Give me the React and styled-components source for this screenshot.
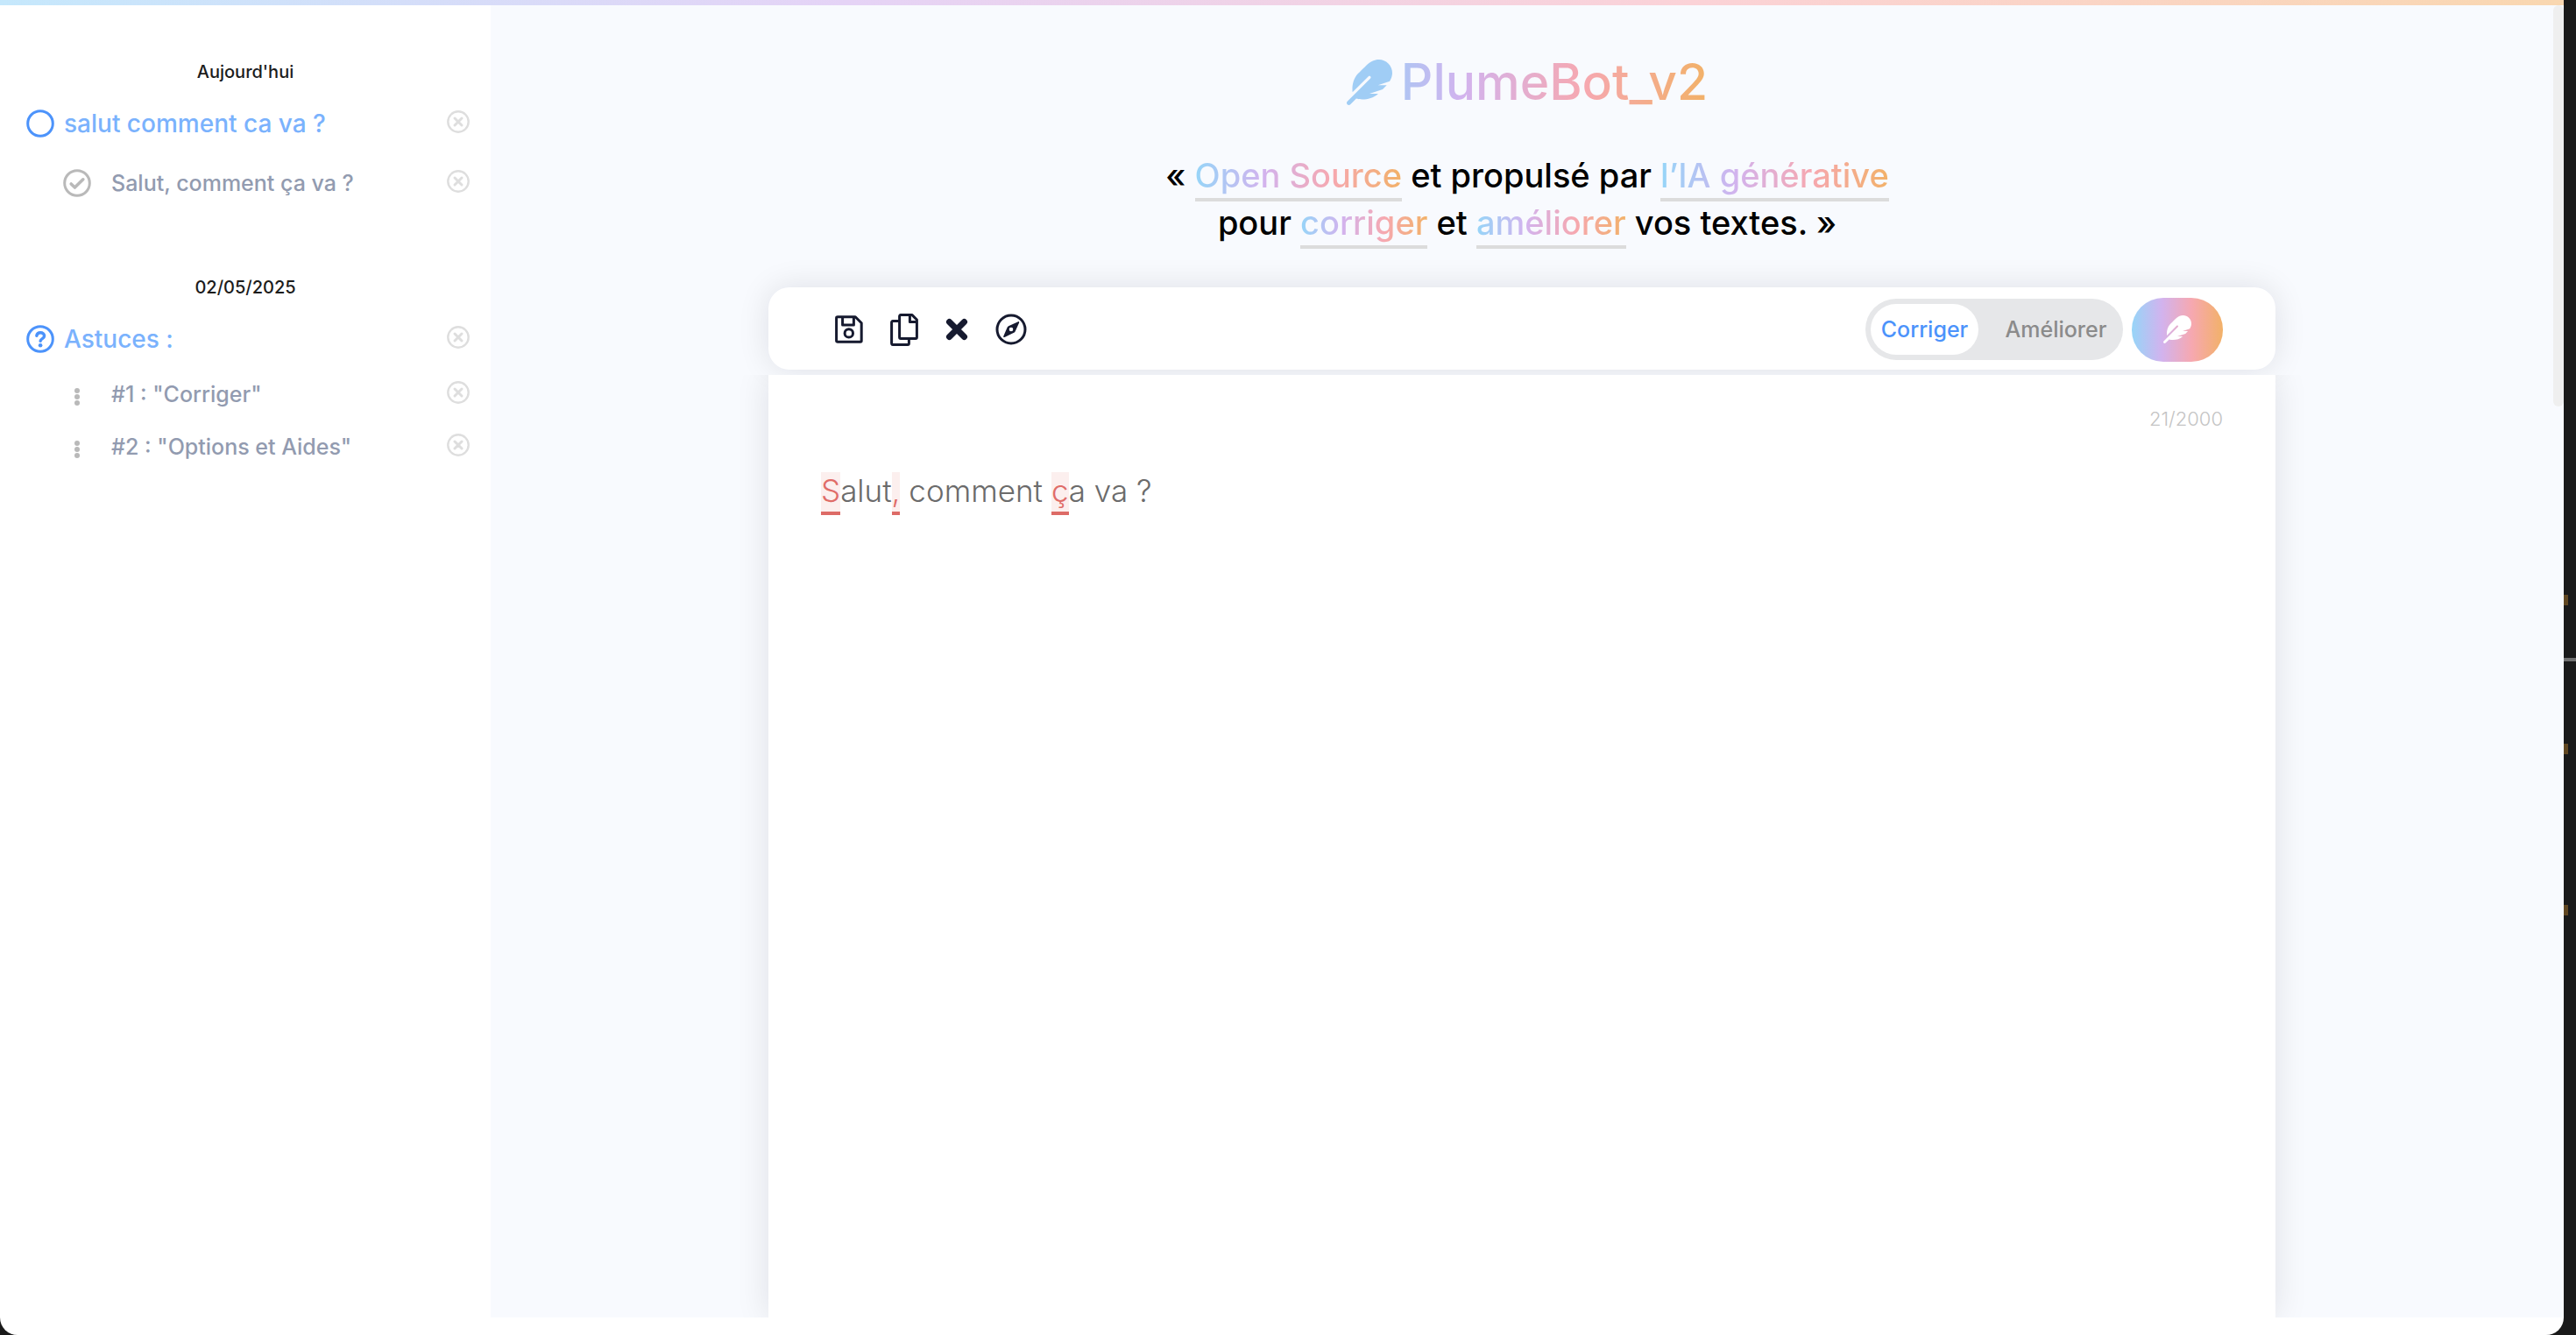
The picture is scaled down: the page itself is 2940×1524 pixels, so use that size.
import React, { useState } from "react";
import styled, { createGlobalStyle, css } from "styled-components";
import { FaFeather } from "react-icons/fa";

const rainbow = "linear-gradient(90deg, #96d5f8 0%, #d2b3ee 33%, #f6a8b0 66%, #f2b168 100%)";

const GlobalStyle = createGlobalStyle`
  * { box-sizing: border-box; }
  body { margin: 0; background: #1a1a1a; font-family: Inter, "Open Sans", sans-serif; overflow: hidden; }
  button { font: inherit; color: inherit; border: 0; padding: 0; background: none; cursor: pointer; }
  h1, h2, p, ul { margin: 0; padding: 0; }
  svg { display: block; }
`;

const Desktop = styled.div`
  position: relative;
  height: 100vh;
  padding-right: 14px;
  background: #1a1a1a;
`;

const Mark = styled.span`
  position: absolute;
  right: ${(p) => (p.$wide ? "0" : "9px")};
  top: ${(p) => p.$top}px;
  width: ${(p) => (p.$wide ? "14px" : "5px")};
  height: ${(p) => (p.$wide ? "4px" : "12px")};
  background: ${(p) => (p.$wide ? "#707070" : "#614721")};
`;

const Window = styled.div`
  position: relative;
  height: 100%;
  display: flex;
  flex-direction: column;
  padding-bottom: 20px;
  background: #fff;
  border-radius: 0 0 20px 20px;
  overflow: hidden;
`;

const Strip = styled.div`
  flex: none;
  height: 6px;
  background: linear-gradient(90deg, #c5e8fc 0%, #e5d3f6 33%, #fbd2d7 66%, #f9d7b0 100%);
`;

const Columns = styled.div`
  flex: 1;
  min-height: 0;
  display: flex;
`;

const Sidebar = styled.aside`
  flex: none;
  width: 560px;
  padding: 56px 24px 0 30px;
  background: #fff;
`;

const Day = styled.section`
  margin-bottom: 52px;
`;

const DayTitle = styled.h2`
  margin: 0 0 18px;
  padding-right: 6px;
  font-size: 20px;
  font-weight: 500;
  line-height: 40px;
  text-align: center;
  color: #1c1c1c;
`;

const Row = styled.li`
  display: flex;
  align-items: center;
  height: ${(p) => p.$height}px;
  padding-left: ${(p) => (p.$child ? "42px" : "0")};
  list-style: none;
  color: ${(p) => (p.$child ? "#b9b9b9" : "#4c93fb")};
`;

const RowIcon = styled.span`
  flex: none;
  width: 32px;
  margin-right: ${(p) => (p.$child ? "23px" : "11px")};
`;

const RowLink = styled.a`
  flex: 1;
  color: ${(p) => (p.$child ? "#929bb0" : "#7ab2fd")};
  font-size: ${(p) => (p.$child ? "25px" : "28px")};
  font-weight: 500;
  text-decoration: none;
  white-space: nowrap;
`;

const RemoveButton = styled.button`
  color: #dedede;
  margin-bottom: 4px;
`;

const Main = styled.main`
  position: relative;
  flex: 1;
  min-width: 0;
  display: flex;
  flex-direction: column;
  background: #f8fafe;
  overflow: hidden;
`;

const Header = styled.header`
  text-align: center;
  padding-top: 48px;
`;

const Title = styled.h1`
  display: flex;
  align-items: center;
  justify-content: center;
  gap: 10px;
  font-size: 57px;
  font-weight: 500;
  line-height: 80px;
`;

const gradientText = css`
  background: ${rainbow};
  -webkit-background-clip: text;
  background-clip: text;
  color: transparent;
`;

const TitleText = styled.span`
  background: linear-gradient(90deg, #afc5f3 0%, #d2b3ee 20%, #f6a8b0 60%, #f2b168 100%);
  -webkit-background-clip: text;
  background-clip: text;
  color: transparent;
`;

const Tagline = styled.p`
  margin-top: 39px;
  font-size: 38px;
  font-weight: 500;
  line-height: 54px;
  color: #000;
`;

const Accent = styled.span`
  ${gradientText}
  padding-bottom: 3px;
  border-bottom: 4px solid #dcdcdc;
`;

const Editor = styled.div`
  flex: 1;
  min-height: 0;
  display: flex;
  flex-direction: column;
  align-items: center;
  gap: 6px;
  padding: 47px 12px 0 0;
`;

const panel = css`
  width: 100%;
  max-width: 1720px;
  background: #fff;
  box-shadow: 0 0 36px rgba(20, 20, 30, 0.11);
`;

const Toolbar = styled.div`
  ${panel}
  flex: none;
  display: flex;
  align-items: center;
  justify-content: space-between;
  height: 94px;
  padding: 2px 60px 0 76px;
  border-radius: 24px;
`;

const Sheet = styled.section`
  ${panel}
  flex: 1;
  padding: 34px 60px;
  clip-path: inset(0 -60px 0 -60px);
`;

const Tools = styled.div`
  display: flex;
  align-items: center;
  gap: 31px;
  color: #161a2f;
`;

const Actions = styled.div`
  display: flex;
  align-items: center;
  gap: 10px;
`;

const Toggle = styled.div`
  display: flex;
  width: 294px;
  height: 70px;
  padding: 6px;
  border-radius: 35px;
  background: #e6e7e9;
`;

const Mode = styled.button`
  flex: ${(p) => (p.$active ? "0 0 123px" : "1")};
  padding-left: ${(p) => (p.$active ? "0" : "18px")};
  border-radius: 29px;
  background: ${(p) => (p.$active ? "#fff" : "transparent")};
  color: ${(p) => (p.$active ? "#4c93fb" : "#8b8b8b")};
  font-size: 25px;
  font-weight: 500;
`;

const RunButton = styled.button`
  display: flex;
  align-items: center;
  justify-content: center;
  width: 104px;
  height: 73px;
  border-radius: 36px;
  background: ${rainbow};
  color: #fff;
`;

const Counter = styled.p`
  font-size: 22px;
  font-weight: 300;
  line-height: 32px;
  text-align: right;
  color: #c4c4c4;
`;

const Text = styled.p`
  margin-top: 39px;
  font-size: 35px;
  font-weight: 300;
  line-height: 54px;
  color: #6b6b6b;
`;

const Fix = styled.mark`
  padding-bottom: 3px;
  background: #fcefee;
  color: #e06c68;
  border-bottom: 4px solid #dd6b67;
`;

const ScrollThumb = styled.div`
  position: absolute;
  top: 0;
  right: 0;
  width: 12px;
  height: 458px;
  border-radius: 6px;
  background: #efefef;
`;

const CircleIcon = ({ children }) => (
  <svg width="32" height="32" viewBox="0 0 32 32" fill="none" stroke="currentColor" strokeWidth="3" strokeLinecap="round" strokeLinejoin="round" aria-hidden="true">
    <circle cx="16" cy="16" r="14.3" />
    {children}
  </svg>
);

const CheckIcon = () => (
  <CircleIcon>
    <path d="M9.2 17 13.4 21 22.8 11.8" strokeWidth="3.6" />
  </CircleIcon>
);

const HelpIcon = () => (
  <CircleIcon>
    <path d="M11.8 12.4c.4-2.4 2.2-3.6 4.4-3.6 2.5 0 4.4 1.4 4.4 3.7 0 3.2-4.3 3-4.5 5.9" strokeWidth="3.4" />
    <circle cx="16.1" cy="23.2" r="2.3" fill="currentColor" stroke="none" />
  </CircleIcon>
);

const DotsIcon = () => (
  <svg width="32" height="26" viewBox="0 0 32 26" fill="currentColor" aria-hidden="true">
    <circle cx="16" cy="9" r="3" />
    <circle cx="16" cy="16" r="3" />
    <circle cx="16" cy="23" r="3" />
  </svg>
);

const RemoveIcon = () => (
  <svg width="26" height="26" viewBox="0 0 26 26" fill="none" stroke="currentColor" strokeWidth="2.4" strokeLinecap="round" aria-hidden="true">
    <circle cx="13" cy="13" r="11.7" />
    <path d="M9 9l8 8M17 9l-8 8" strokeWidth="3" />
  </svg>
);

const SaveIcon = () => (
  <svg width="32" height="32" viewBox="0 0 32 32" fill="none" stroke="currentColor" strokeWidth="3" strokeLinejoin="round" aria-hidden="true">
    <path d="M3 1.8H23.2L30.2 8.8V29Q30.2 30.2 29 30.2H3Q1.6 30.2 1.6 29V3Q1.6 1.8 3 1.8Z" />
    <path d="M8.6 2V11H21.4V2" />
    <circle cx="15.8" cy="20.4" r="4.7" />
  </svg>
);

const CopyIcon = () => (
  <svg width="32" height="37" viewBox="0 0 32 37" fill="none" stroke="currentColor" strokeWidth="3" strokeLinejoin="round" aria-hidden="true">
    <path d="M12 1.6H25L30.4 7V27Q30.4 28.4 29 28.4H12Q10.6 28.4 10.6 27V3Q10.6 1.6 12 1.6Z" />
    <path d="M22.4 2V9.6H30" />
    <path d="M10 8.6H3Q1.6 8.6 1.6 10V34Q1.6 35.4 3 35.4H20Q21.4 35.4 21.4 34V29" />
  </svg>
);

const ClearIcon = () => (
  <svg width="26" height="26" viewBox="0 0 26 26" fill="none" stroke="currentColor" strokeWidth="7" strokeLinecap="round" aria-hidden="true">
    <path d="M4.5 4.5l17 17M21.5 4.5l-17 17" />
  </svg>
);

const CompassIcon = () => (
  <svg width="36" height="36" viewBox="0 0 36 36" fill="none" aria-hidden="true">
    <circle cx="18" cy="18" r="16" stroke="currentColor" strokeWidth="3" />
    <path fill="currentColor" fillRule="evenodd" d="M26 9.2Q27.6 8.7 27.1 10.4L22.7 20.2Q22.2 21.2 21.2 21.7L10.5 26.9Q8.7 27.5 9.3 25.8L13.6 15.8Q14 14.8 15 14.3ZM18 15.7A2.3 2.3 0 1 0 18 20.3A2.3 2.3 0 1 0 18 15.7Z" />
  </svg>
);

const FeatherIcon = styled(FaFeather)`
  fill: ${(p) => (p.$tinted ? "url(#feather-tint)" : "currentColor")};
`;

const TintDefs = () => (
  <svg width="0" height="0" style={{ display: "none" }} aria-hidden="true">
    <linearGradient id="feather-tint">
      <stop offset="0" stopColor="#96d5f8" />
      <stop offset="1" stopColor="#a9c8f4" />
    </linearGradient>
  </svg>
);

const tools = [
  { label: "Enregistrer", Icon: SaveIcon },
  { label: "Copier", Icon: CopyIcon },
  { label: "Effacer", Icon: ClearIcon },
  { label: "Explorer", Icon: CompassIcon },
];

const history = [
  {
    day: "Aujourd'hui",
    rows: [
      { text: "salut comment ca va ?", Icon: CircleIcon, height: 42 },
      { text: "Salut, comment ça va ?", Icon: CheckIcon, child: true, height: 94 },
    ],
  },
  {
    day: "02/05/2025",
    rows: [
      { text: "Astuces :", Icon: HelpIcon, height: 42 },
      { text: '#1 : "Corriger"', Icon: DotsIcon, child: true, height: 84 },
      { text: '#2 : "Options et Aides"', Icon: DotsIcon, child: true, height: 36 },
    ],
  },
];

export default function App() {
  const [mode, setMode] = useState("Corriger");
  return (
    <Desktop>
      <GlobalStyle />
      <TintDefs />
      <Window>
        <Strip />
        <Columns>
          <Sidebar>
            {history.map(({ day, rows }) => (
              <Day key={day}>
                <DayTitle>{day}</DayTitle>
                <ul>
                  {rows.map(({ text, Icon, child, height }) => (
                    <Row key={text} $child={child} $height={height}>
                      <RowIcon $child={child}><Icon /></RowIcon>
                      <RowLink href="#" $child={child}>{text}</RowLink>
                      <RemoveButton aria-label="Supprimer"><RemoveIcon /></RemoveButton>
                    </Row>
                  ))}
                </ul>
              </Day>
            ))}
          </Sidebar>
          <Main>
            <Header>
              <Title>
                <FeatherIcon size={52} color="#a0cdf5" />
                <TitleText>PlumeBot_v2</TitleText>
              </Title>
              <Tagline>
                « <Accent>Open Source</Accent> et propulsé par <Accent>l’IA générative</Accent>
                <br />
                pour <Accent>corriger</Accent> et <Accent>améliorer</Accent> vos textes. »
              </Tagline>
            </Header>
            <Editor>
              <Toolbar>
                <Tools>
                  {tools.map(({ label, Icon }) => (
                    <button key={label} aria-label={label}><Icon /></button>
                  ))}
                </Tools>
                <Actions>
                  <Toggle>
                    {["Corriger", "Améliorer"].map((name) => (
                      <Mode key={name} $active={mode === name} onClick={() => setMode(name)}>{name}</Mode>
                    ))}
                  </Toggle>
                  <RunButton aria-label="Lancer"><FeatherIcon size={32} /></RunButton>
                </Actions>
              </Toolbar>
              <Sheet>
                <Counter>21/2000</Counter>
                <Text>
                  <Fix>S</Fix>alut<Fix>,</Fix> comment <Fix>ç</Fix>a va ?
                </Text>
              </Sheet>
            </Editor>
            <ScrollThumb />
          </Main>
        </Columns>
      </Window>
      <Mark $top={679} />
      <Mark $top={751} $wide />
      <Mark $top={849} />
      <Mark $top={1033} />
    </Desktop>
  );
}
